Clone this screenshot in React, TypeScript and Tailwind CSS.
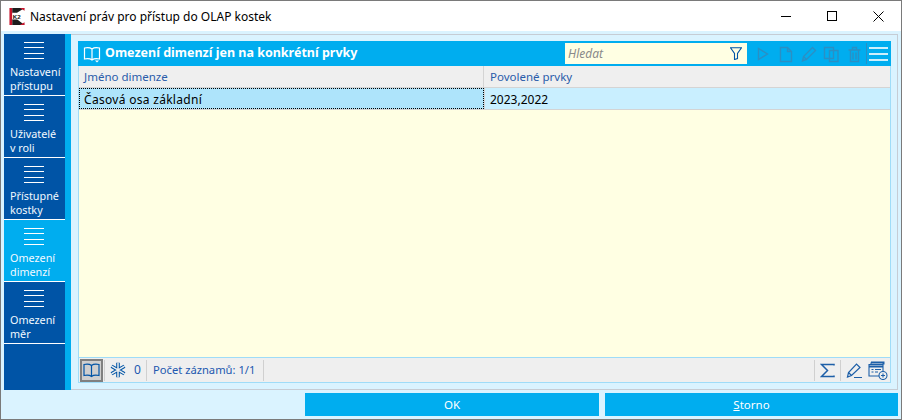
const navItems = [
  { lines: ["Nastavení", "přístupu"] },
  { lines: ["Uživatelé", "v roli"] },
  { lines: ["Přístupné", "kostky"] },
  { lines: ["Omezení", "dimenzí"], active: true },
  { lines: ["Omezení", "měr"] },
];

function Book({ color = "#fff", size = 18 }: { color?: string; size?: number }) {
  return (
    <svg width={size} height={size} viewBox="0 0 18 18" fill="none" stroke={color} strokeWidth="1.2">
      <path d="M9 4C7.500 2.800 4 2.500 1.500 3v11c2.500-.5 6-.2 7.500 1 1.500-1.200 5-1.500 7.500-1V3C14 2.500 10.500 2.800 9 4zM9 4v11" />
      <path d="M12 15.500h4l-2 2z" fill={color} stroke="none" />
    </svg>
  );
}

function NavItem({ lines, active }: { lines: string[]; active?: boolean }) {
  return (
    <div className={`h-[62px] border-b border-white pt-[7px] ${active ? "bg-[#00adef]" : "bg-[#0054a6]"}`}>
      <div className="w-5 h-[18px] flex flex-col justify-between pt-px ml-[20px]">
        <div className="h-px bg-white" />
        <div className="h-px bg-white" />
        <div className="h-px bg-white" />
        <div className="h-px bg-white" />
      </div>
      <div className="ml-[6px] mt-[6px] text-[10.800px] leading-[14px] text-[#f2f9ff] whitespace-nowrap">
        {lines.map((l) => (
          <div key={l}>{l}</div>
        ))}
      </div>
    </div>
  );
}

function HeaderTools() {
  const c = "#2a8fc4";
  return (
    <div className="flex items-center h-full">
      <svg width="108" height="18" viewBox="0 0 108 18" fill="none" stroke={c} strokeWidth="1.400">
        <path d="M3.500 3.500v11l9-5.500z" />
        <path d="M25.500 2.500h7l4 4v10h-11zM32.500 2.500v4h4" />
        <path d="M47.500 16l1-4.500 9-9 3 3-9 9zM48.500 11.500l3.500 3.500" />
        <path d="M69.500 2.500h9v11h-9zM74.500 5.500h8.500v11h-8.500z" />
        <path d="M93.500 5h12M95.500 5v11.500h8V5M97.500 5V2.500h4V5M98 7.500v7M101 7.500v7" />
      </svg>
      <div className="w-px h-[21px] bg-[#2a8fc4] ml-[3px]" />
      <div className="w-[19px] ml-[2px] mr-[3px] flex flex-col gap-[4px]">
        <div className="h-[2px] bg-white/80" />
        <div className="h-[2px] bg-white/80" />
        <div className="h-[2px] bg-white/80" />
      </div>
    </div>
  );
}

const snowArms = "M8 .8v14.400M1.500 4.200l13 7.600M14.500 4.200l-13 7.600";

export default function App() {
  return (
    <div
      className="w-[902px] h-[420px] border border-[#7a7a7a] bg-[#daf3ff] flex flex-col overflow-hidden"
      style={{ fontFamily: '"Noto Sans", "Open Sans", sans-serif' }}
    >
      {/* title bar */}
      <div className="h-[30px] bg-white flex items-center shrink-0">
        <svg width="16" height="17" viewBox="0 0 16 18" className="ml-[8px]">
          <rect width="16" height="18" fill="#fff" />
          <path d="M0 0h3v18H0z" fill="#c8142c" />
          <path d="M3 0h13L8 5H3zM3 12h5l8 6H3z" fill="#1d1d1d" />
          <path d="M11 0h5v3zM16 18h-5l5-3z" fill="#c8142c" />
          <rect x="3" y="6" width="12" height="6" fill="#fff" />
          <text x="3.500" y="11.500" fontSize="6.500" fontWeight="700" fontFamily="Liberation Sans" fill="#111">K2</text>
        </svg>
        <span className="ml-[5px] mt-[2px] text-[12px] text-black">Nastavení práv pro přístup do OLAP kostek</span>
        <div className="ml-auto flex items-center">
          <div className="w-[46px] flex justify-center">
            <div className="w-[10px] h-px bg-black" />
          </div>
          <div className="w-[46px] flex justify-center">
            <div className="w-[10px] h-[10px] border border-black" />
          </div>
          <div className="w-[46px] flex justify-center">
            <svg width="11" height="11" viewBox="0 0 11 11" stroke="#000" strokeWidth="1">
              <path d="M.5.500l10 10M10.500.500l-10 10" />
            </svg>
          </div>
        </div>
      </div>

      {/* main */}
      <div className="flex flex-1 px-[3px] pt-[3px] min-h-0">
        <div className="w-[61px] bg-[#0054a6] shrink-0 h-[356px]">
          {navItems.map((n) => (
            <NavItem key={n.lines.join()} lines={n.lines} active={n.active} />
          ))}
        </div>
        <div className="w-[6px] bg-[#00adef] h-[356px] shrink-0" />
        <div className="w-[827px] h-[356px] border-t border-b border-r border-[#c6ccd4] pl-[7px] pr-[6px] pt-[6px]">
          <div className="h-[342px] w-[813px] flex flex-col border-x border-b border-[#9fdcf8]">
            {/* panel header */}
            <div className="h-[25px] -mx-px bg-[#00adef] flex items-center shrink-0">
              <div className="ml-[5px] mt-[1px]">
                <Book />
              </div>
              <span className="ml-[4px] text-[12.500px] font-bold text-white">Omezení dimenzí jen na konkrétní prvky</span>
              <div className="ml-auto flex items-center h-full">
                <div className="w-[182px] h-[21px] bg-[#ffffe3] flex items-center justify-between pl-[3px] pr-[5px]">
                  <span className="text-[12px] italic text-[#8a8a8a]">Hledat</span>
                  <svg width="12" height="13" viewBox="0 0 12 13" fill="none" stroke="#0054a6" strokeWidth="1.100">
                    <path d="M.5.800h11L7.500 6.500v5l-3 1v-6z" />
                  </svg>
                </div>
                <div className="w-[8px]" />
                <HeaderTools />
              </div>
            </div>

            {/* column headers */}
            <div className="h-[22px] bg-[#efefef] flex text-[11.500px] text-[#2a5caa] border-b border-[#d4d4d4] shrink-0">
              <div className="w-[405px] border-r border-[#d4d4d4] pl-[5px] leading-[22px]">Jméno dimenze</div>
              <div className="flex-1 pl-[6px] leading-[22px]">Povolené prvky</div>
            </div>

            {/* row */}
            <div className="h-[22px] bg-[#c9efff] flex text-[12px] text-black border-b border-[#d4d4d4] shrink-0">
              <div className="w-[405px] bg-[#aee4fb] border border-dotted border-black pl-[4px] leading-[22px] tracking-[0.3px]">Časová osa základní</div>
              <div className="flex-1 border-l border-[#d4d4d4] pl-[5px] leading-[24px]">2023,2022</div>
            </div>

            <div className="flex-1 bg-[#ffffe3]" />

            {/* status bar */}
            <div className="h-[25px] bg-[#efefef] border-t border-[#9fdcf8] flex items-center text-[11.200px] text-[#2258b0] shrink-0">
              <div className="w-[23px] h-[23px] ml-px bg-[#cfcfcf] border-2 border-[#808080] flex items-center justify-center">
                <svg width="17" height="15" viewBox="0 0 17 15" fill="none" stroke="#0054a6" strokeWidth="1.200">
                  <path d="M8.500 2.500C7 1.300 3.500 1 1 1.500v11c2.500-.5 6-.2 7.500 1 1.500-1.200 5-1.500 7.500-1v-11C13.500 1 10 1.300 8.500 2.500zM8.500 2.500v11" />
                </svg>
              </div>
              <div className="w-px h-[21px] bg-[#d0d0d0] ml-[1px]" />
              <svg width="16" height="16" viewBox="0 0 16 16" fill="none" className="ml-[5px]">
                <path d={snowArms} stroke="#0054a6" strokeWidth="3.600" />
                <path d={snowArms} stroke="#efefef" strokeWidth="1.500" />
              </svg>
              <span className="ml-[8px] w-[10px] text-[12px]">0</span>
              <div className="w-px h-[21px] bg-[#d0d0d0] ml-[2px]" />
              <span className="ml-[6px]">Počet záznamů: 1/1</span>
              <div className="w-px h-[21px] bg-[#d0d0d0] ml-[8px]" />
              <div className="ml-auto flex items-center">
                <div className="w-px h-[21px] bg-[#d0d0d0]" />
                <span className="w-[25px] flex justify-center">
                  <svg width="15" height="15" viewBox="0 0 15 15" fill="none" stroke="#1d5fa8" strokeWidth="1.500">
                    <path d="M14 2.500V1.500H1.500L7.500 7.500l-6 6H14v-1" />
                  </svg>
                </span>
                <div className="w-px h-[21px] bg-[#d0d0d0]" />
                <span className="w-[26px] flex justify-center">
                  <svg width="17" height="17" viewBox="0 0 17 17" fill="none" stroke="#1d5fa8" strokeWidth="1.200">
                    <path d="M1.500 15l1-4.500 8-8.500 3.500 3.500-8.500 8zM2.500 10.500l3 3M8 15.500h8" />
                  </svg>
                </span>
                <span className="w-[21px] flex justify-center mr-[2px]">
                  <svg width="20" height="19" viewBox="0 0 20 19" fill="none" stroke="#1d5fa8" strokeWidth="1.100">
                    <path d="M3 1.500h12.500v2" strokeWidth="2" />
                    <path d="M3 1.500v2M1 3.500h14v11.500H1z" />
                    <path d="M1 5.500h14" strokeWidth="2" />
                    <path d="M3.500 8.500h2M7 8.500h6M3.500 11h2M7 11h3" />
                    <circle cx="15" cy="14.500" r="4" fill="#efefef" />
                    <path d="M15 12.500v4M13 14.500h4" />
                  </svg>
                </span>
              </div>
            </div>
          </div>
        </div>
      </div>

      {/* buttons */}
      <div className="h-[29px] shrink-0 flex justify-end gap-[6px] pr-[3px] pb-[3px] pt-[3px]">
        <div className="w-[294px] h-[23px] bg-[#00adef] text-white text-[11.500px] flex items-center justify-center">OK</div>
        <div className="w-[293px] h-[23px] bg-[#00adef] text-white text-[11.500px] flex items-center justify-center">
          <span><span className="underline">S</span>torno</span>
        </div>
      </div>
    </div>
  );
}
